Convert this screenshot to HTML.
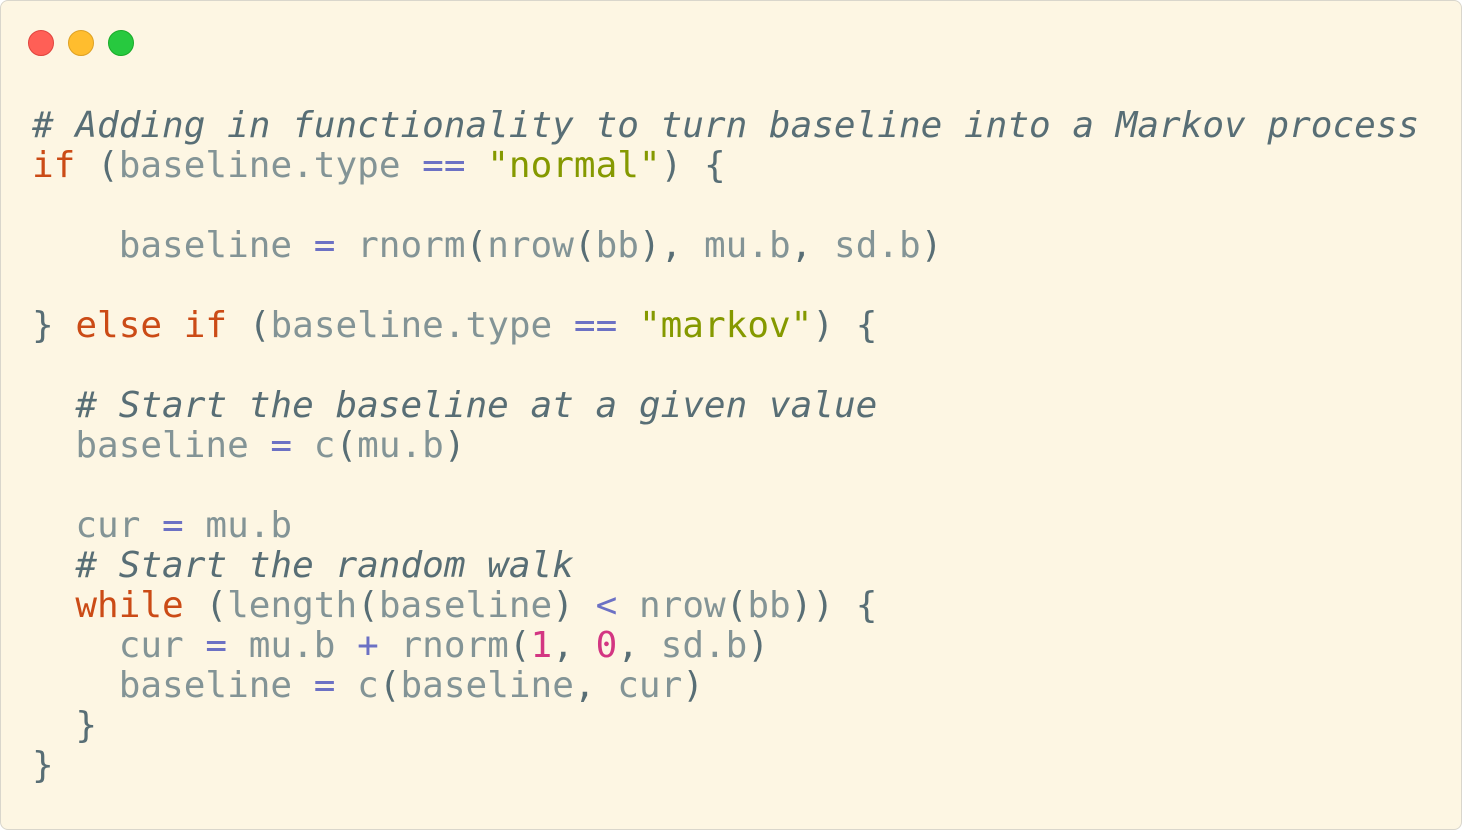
<!DOCTYPE html>
<html><head><style>
html,body{margin:0;padding:0;background:#fff;}
.win{position:absolute;left:0;top:0;width:1460px;height:828px;background:#fdf6e3;border:1px solid #d9d6cc;border-radius:8px;overflow:hidden;}
.dot{position:absolute;top:29px;width:24px;height:24px;border-radius:50%;}
pre{position:absolute;left:31px;top:105px;margin:0;font-family:"DejaVu Sans Mono","Liberation Mono",monospace;font-size:36px;line-height:40px;color:#839496;}
.c{color:#586e75;font-style:italic}
.k{color:#cb4b16}
.s{color:#859900}
.o{color:#6c71c4}
.n{color:#d33682}
.p{color:#586e75}
</style></head><body>
<div class="win">
<div class="dot" style="left:27px;background:#ff5f56;border:0.5px solid #e0443e"></div>
<div class="dot" style="left:67px;background:#ffbd2e;border:0.5px solid #dea123"></div>
<div class="dot" style="left:107px;background:#27c93f;border:0.5px solid #1aab29"></div>
<pre><span class="c"># Adding in functionality to turn baseline into a Markov process</span>
<span class="k">if</span> <span class="p">(</span>baseline.type <span class="o">==</span> <span class="s">"normal"</span><span class="p">)</span> <span class="p">{</span>

    baseline <span class="o">=</span> rnorm<span class="p">(</span>nrow<span class="p">(</span>bb<span class="p">),</span> mu.b<span class="p">,</span> sd.b<span class="p">)</span>

<span class="p">}</span> <span class="k">else if</span> <span class="p">(</span>baseline.type <span class="o">==</span> <span class="s">"markov"</span><span class="p">)</span> <span class="p">{</span>

  <span class="c"># Start the baseline at a given value</span>
  baseline <span class="o">=</span> c<span class="p">(</span>mu.b<span class="p">)</span>

  cur <span class="o">=</span> mu.b
  <span class="c"># Start the random walk</span>
  <span class="k">while</span> <span class="p">(</span>length<span class="p">(</span>baseline<span class="p">)</span> <span class="o">&lt;</span> nrow<span class="p">(</span>bb<span class="p">))</span> <span class="p">{</span>
    cur <span class="o">=</span> mu.b <span class="o">+</span> rnorm<span class="p">(</span><span class="n">1</span><span class="p">,</span> <span class="n">0</span><span class="p">,</span> sd.b<span class="p">)</span>
    baseline <span class="o">=</span> c<span class="p">(</span>baseline<span class="p">,</span> cur<span class="p">)</span>
  <span class="p">}</span>
<span class="p">}</span></pre>
</div>
</body></html>
